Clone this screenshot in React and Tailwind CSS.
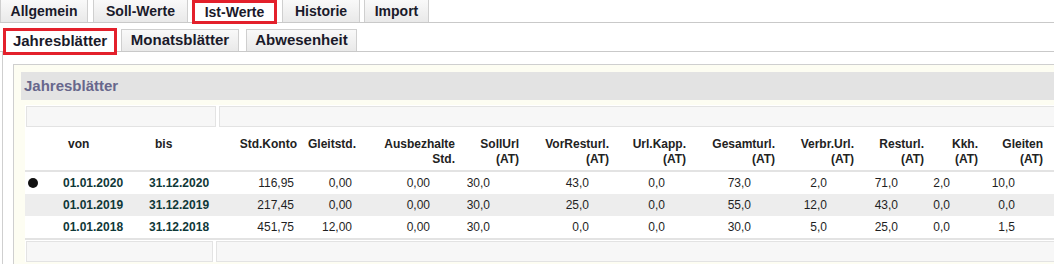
import React from "react";

const topTabs = [
  { label: "Allgemein", cls: "w-[88px] ml-0" },
  { label: "Soll-Werte", cls: "w-[95px] ml-[5px]" },
  { label: "Ist-Werte", cls: "w-[85px] ml-[4px]", active: true },
  { label: "Historie", cls: "w-[78px] ml-[5px]" },
  { label: "Import", cls: "w-[65px] ml-[4px]" },
];

const subTabs = [
  { label: "Jahresblätter", cls: "w-[114px] ml-[3px]", active: true },
  { label: "Monatsblätter", cls: "w-[118px] ml-[4px]" },
  { label: "Abwesenheit", cls: "w-[111px] ml-[7px]" },
];

const cols = [
  { w: "w-[35px]", h: [""], hc: "text-left", vc: "text-left pl-[3px]" },
  { w: "w-[80px]", h: ["von"], hc: "text-left pl-[8px]", vc: "text-left pl-[3px]" },
  { w: "w-[80px]", h: ["bis"], hc: "text-left pl-[15px]", vc: "text-left pl-[9px]" },
  { w: "w-[80px]", h: ["Std.Konto"], hc: "text-right pr-[3px]", vc: "text-right pr-[6px]" },
  { w: "w-[60px]", h: ["Gleitstd."], hc: "text-right pr-[4px]", vc: "text-right pr-[8px]" },
  { w: "w-[99px]", h: ["Ausbezhalte", "Std."], hc: "text-right pr-[4px]", vc: "text-right pr-[29px]" },
  { w: "w-[64px]", h: ["SollUrl", "(AT)"], hc: "text-right pr-[4px]", vc: "text-right pr-[33px]" },
  { w: "w-[90px]", h: ["VorResturl.", "(AT)"], hc: "text-right pr-[4px]", vc: "text-right pr-[24px]" },
  { w: "w-[77px]", h: ["Url.Kapp.", "(AT)"], hc: "text-right pr-[4px]", vc: "text-right pr-[25px]" },
  { w: "w-[89px]", h: ["Gesamturl.", "(AT)"], hc: "text-right pr-[4px]", vc: "text-right pr-[28px]" },
  { w: "w-[79px]", h: ["Verbr.Url.", "(AT)"], hc: "text-right pr-[4px]", vc: "text-right pr-[31px]" },
  { w: "w-[70px]", h: ["Resturl.", "(AT)"], hc: "text-right pr-[4px]", vc: "text-right pr-[30px]" },
  { w: "w-[54px]", h: ["Kkh.", "(AT)"], hc: "text-right pr-[4px]", vc: "text-right pr-[32px]" },
  { w: "w-[65px]", h: ["Gleiten", "(AT)"], hc: "text-right pr-[4px]", vc: "text-right pr-[32px]" },
];

const rows = [
  { cur: true, v: ["01.01.2020", "31.12.2020", "116,95", "0,00", "0,00", "30,0", "43,0", "0,0", "73,0", "2,0", "71,0", "2,0", "10,0"] },
  { v: ["01.01.2019", "31.12.2019", "217,45", "0,00", "0,00", "30,0", "25,0", "0,0", "55,0", "12,0", "43,0", "0,0", "0,0"], alt: true },
  { v: ["01.01.2018", "31.12.2018", "451,75", "12,00", "0,00", "30,0", "0,0", "0,0", "30,0", "5,0", "25,0", "0,0", "1,5"] },
];

function Tab({ t, big }) {
  if (t.active) {
    return (
      <div
        className={`${t.cls} ${big ? "h-[27px] mt-[5px] text-[15px]" : "h-[24px] text-[14px]"} shrink-0 relative z-10 bg-white border-[3px] border-[#e3202b] flex items-center justify-center font-bold text-[#1a1a2a]`}
      >
        {t.label}
      </div>
    );
  }
  return (
    <div
      className={`${t.cls} ${big ? "h-[22px] mt-[6px] text-[15px] border-t" : "h-[22px] text-[14px]"} shrink-0 border-l border-r border-[#cfcfcf] bg-gradient-to-b from-[#f9f9f9] to-[#e9e9e9] flex items-center justify-center font-bold text-[#1a1a2a]`}
    >
      {t.label}
    </div>
  );
}

function EmptyRow({ first }) {
  return (
    <div className="flex h-[21px] gap-[3px] pl-px">
      <div className={`${first ? "w-[190px]" : "w-[187px]"} shrink-0 border border-[#e3e3e3] bg-[#f7f7f7]`} />
      <div className="flex-1 border border-[#e3e3e3] bg-[#f7f7f7]" />
    </div>
  );
}

export default function App() {
  return (
    <div className="w-[1054px] h-[264px] overflow-hidden bg-white font-['Liberation_Sans',Arial,sans-serif]">
      <div className="flex items-start h-[23px] border-b border-[#c9c9c9]">
        {topTabs.map((t) => (
          <Tab key={t.label} t={t} />
        ))}
      </div>
      <div className="flex items-start h-[29px] border-b border-[#c9c9c9]">
        {subTabs.map((t) => (
          <Tab key={t.label} t={t} big />
        ))}
      </div>
      <div className="ml-[2px] border-l border-[#cfcfcf] h-[220px] pl-[10px] pt-[12px]">
        <div className="h-full border-t border-l border-[#cfcfcf] bg-[#fdfdf2] pl-[7px] pt-[7px]">
          <div className="h-[28px] bg-[#e3e3e3] flex items-center pl-[3px] text-[15px] font-bold text-[#67678c]">
            Jahresblätter
          </div>
          <div className="mt-[5px] ml-[4px] bg-white w-[1200px] pt-px">
            <EmptyRow first />
            <div className="flex h-[45px] border-b-2 border-[#e3e3e3] text-[12px] font-bold text-[#222] leading-[15px]">
              {cols.map((c, i) => (
                <div key={i} className={`${c.w} ${c.hc} shrink-0 pt-[10px]`}>
                  {c.h.map((l, j) => (
                    <div key={j}>{l}</div>
                  ))}
                </div>
              ))}
            </div>
            {rows.map((r, ri) => (
              <div
                key={ri}
                className={`flex h-[22px] items-center text-[12px] ${r.alt ? "bg-[#ededed]" : "bg-white"}`}
              >
                <div className={`${cols[0].w} ${cols[0].vc} shrink-0`}>
                  {r.cur && <div className="w-[10px] h-[10px] rounded-full bg-[#111]" />}
                </div>
                {r.v.map((v, vi) => {
                  const c = cols[vi + 1];
                  const isDate = vi < 2;
                  return (
                    <div
                      key={vi}
                      className={`${c.w} ${c.vc} shrink-0 ${isDate ? "font-bold text-[#0f3838]" : "text-[#1f1f1f]"}`}
                    >
                      {v}
                    </div>
                  );
                })}
              </div>
            ))}
            <div className="border-t-2 border-[#e3e3e3] pt-px">
              <EmptyRow />
            </div>
          </div>
        </div>
      </div>
    </div>
  );
}
